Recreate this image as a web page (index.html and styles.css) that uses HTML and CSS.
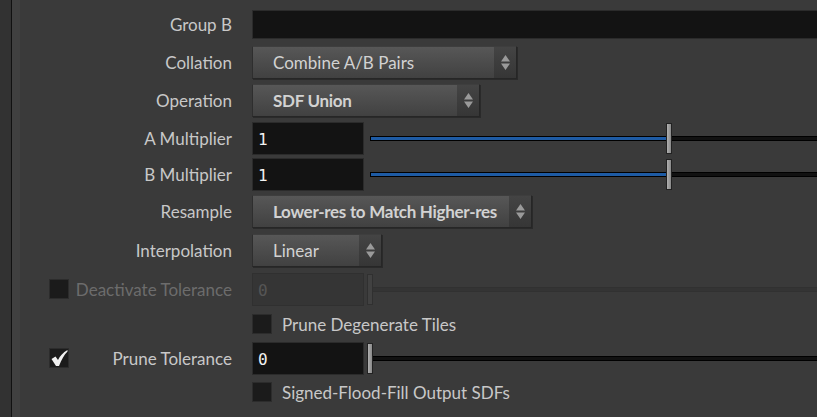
FILE: index.html
```html
<!DOCTYPE html>
<html lang="en">
<head>
  <meta charset="UTF-8">
  <title>VDB Combine</title>
  <link rel="stylesheet" href="styles.css">
</head>
<body>

  <div class="pane">
    <div class="gutter"></div>
    <div class="edge"></div>

    <div class="parms">

      <div class="row">
        <div class="label">Group B</div>
        <div class="field wide"></div>
      </div>

      <div class="row">
        <div class="label">Collation</div>
        <div class="menu w265">
          <span class="menu-text">Combine A/B Pairs</span>
          <span class="menu-arrows"><svg width="9" height="17" viewBox="0 0 9 17"><path d="M4.5 1 L9 7.5 L0 7.5 Z M0 9.5 L9 9.5 L4.5 16 Z"/></svg></span>
        </div>
      </div>

      <div class="row">
        <div class="label">Operation</div>
        <div class="menu w228 changed">
          <span class="menu-text">SDF Union</span>
          <span class="menu-arrows"><svg width="9" height="17" viewBox="0 0 9 17"><path d="M4.5 1 L9 7.5 L0 7.5 Z M0 9.5 L9 9.5 L4.5 16 Z"/></svg></span>
        </div>
      </div>

      <div class="row">
        <div class="label">A Multiplier</div>
        <div class="field num">1</div>
        <div class="slider">
          <div class="track"><div class="fill" style="width: 296px"></div></div>
          <div class="thumb" style="left: 299px"></div>
        </div>
      </div>

      <div class="row short">
        <div class="label">B Multiplier</div>
        <div class="field num">1</div>
        <div class="slider">
          <div class="track"><div class="fill" style="width: 296px"></div></div>
          <div class="thumb" style="left: 299px"></div>
        </div>
      </div>

      <div class="row tall">
        <div class="label">Resample</div>
        <div class="menu w280 changed">
          <span class="menu-text">Lower-res to Match Higher-res</span>
          <span class="menu-arrows"><svg width="9" height="17" viewBox="0 0 9 17"><path d="M4.5 1 L9 7.5 L0 7.5 Z M0 9.5 L9 9.5 L4.5 16 Z"/></svg></span>
        </div>
      </div>

      <div class="row">
        <div class="label">Interpolation</div>
        <div class="menu w130">
          <span class="menu-text">Linear</span>
          <span class="menu-arrows"><svg width="9" height="17" viewBox="0 0 9 17"><path d="M4.5 1 L9 7.5 L0 7.5 Z M0 9.5 L9 9.5 L4.5 16 Z"/></svg></span>
        </div>
      </div>

      <div class="row tall disabled">
        <div class="label toggled">
          <span class="check"></span>
          <span>Deactivate Tolerance</span>
        </div>
        <div class="field num">0</div>
        <div class="slider">
          <div class="track"></div>
          <div class="thumb" style="left: 0px"></div>
        </div>
      </div>

      <div class="row toggle">
        <div class="label"></div>
        <span class="check"></span>
        <span class="check-text">Prune Degenerate Tiles</span>
      </div>

      <div class="row">
        <div class="label toggled">
          <span class="check on"><svg width="18" height="18" viewBox="0 0 18 18"><path d="M1.5 10 L5.5 7.5 L8 11 C10 7 13 3.5 17.5 1 L17.5 2.5 C14 6 11.5 10.5 9 17 L6 17 Z"/></svg></span>
          <span>Prune Tolerance</span>
        </div>
        <div class="field num">0</div>
        <div class="slider">
          <div class="track"></div>
          <div class="thumb" style="left: 0px"></div>
        </div>
      </div>

      <div class="row toggle">
        <div class="label"></div>
        <span class="check"></span>
        <span class="check-text">Signed-Flood-Fill Output SDFs</span>
      </div>

    </div>
  </div>

</body>
</html>
```

FILE: styles.css
```css
html, body {
  margin: 0;
  padding: 0;
  height: 100%;
}
body {
  background: #3a3a3a;
  font-family: 'Lato', 'Liberation Sans', sans-serif;
  font-size: 17px;
  color: #c8c8c8;
  overflow: hidden;
}
.pane {
  display: flex;
  height: 100%;
}
.gutter {
  width: 11px;
  background: #323232;
  flex: none;
}
.edge {
  width: 9px;
  flex: none;
  background: #404040;
  border-left: 1px solid #111;
  box-sizing: border-box;
}
.parms {
  flex: 1;
  padding-top: 5px;
  min-width: 0;
}
.row {
  display: flex;
  align-items: center;
  height: 38px;
}
.row.short {
  height: 34px;
}
.row.tall {
  height: 40px;
}
.row.toggle {
  height: 30px;
}
.label {
  width: 212px;
  margin-right: 20px;
  flex: none;
  text-align: right;
  white-space: nowrap;
}
.label.toggled {
  display: flex;
  align-items: center;
  justify-content: space-between;
  padding-left: 29px;
  box-sizing: border-box;
}
.disabled .label {
  color: #6c6c6c;
}

/* text fields */
.field {
  height: 32px;
  box-sizing: border-box;
  background: #131313;
  border: 1px solid #2b2b2b;
  flex: none;
}
.field.wide {
  flex: 1;
  height: 29px;
  margin-right: -4px;
}
.field.num {
  width: 112px;
  height: 33px;
  padding: 7px 0 0 5px;
  font-family: 'DejaVu Sans Mono', monospace;
  font-size: 16px;
  color: #f2f2f2;
}
.disabled .field.num {
  background: #353535;
  border-color: #303030;
  color: #555;
}

/* sliders */
.slider {
  position: relative;
  flex: 1;
  height: 31px;
  margin-left: 3px;
  display: flex;
  align-items: center;
}
.track {
  height: 3px;
  flex: 1;
  margin-left: 3px;
  margin-right: -4px;
  background: #111;
  border: 1px solid #000;
}
.fill {
  height: 3px;
  background: #1e5ba4;
}
.thumb {
  position: absolute;
  top: 0;
  width: 4px;
  height: 29px;
  background: linear-gradient(to right, #b0b0b0, #8a8a8a);
  border: 1px solid #222;
}
.disabled .track {
  background: #343434;
  border-color: #313131;
}
.disabled .thumb {
  background: #414141;
  border-color: #303030;
}

/* menus */
.menu {
  display: flex;
  height: 33px;
  box-sizing: border-box;
  background: linear-gradient(#575757, #414141);
  border: 1px solid #262626;
  border-top-color: #3e3e3e;
  border-left-color: #2e2e2e;
  box-shadow: 1px 1px 0 #2a2a2a;
  color: #d2d2d2;
  flex: none;
}
.w265 { width: 265px; }
.w228 { width: 228px; }
.w280 { width: 280px; }
.w130 { width: 130px; }
.menu-text {
  flex: 1;
  padding-left: 20px;
  line-height: 31px;
  white-space: nowrap;
}
.menu.changed .menu-text {
  font-weight: bold;
  letter-spacing: -0.3px;
}
.menu-arrows {
  width: 22px;
  display: flex;
  align-items: center;
  justify-content: center;
  background: linear-gradient(#444, #363636);
}
.menu-arrows svg {
  fill: #9a9a9a;
}

/* toggles */
.check {
  width: 20px;
  height: 20px;
  box-sizing: border-box;
  background: #1b1b1b;
  border: 1px solid #2c2c2c;
  flex: none;
  display: flex;
  align-items: center;
  justify-content: center;
}
.check.on svg {
  fill: #f0f0f0;
}
.check-text {
  margin-left: 10px;
  white-space: nowrap;
}
```
